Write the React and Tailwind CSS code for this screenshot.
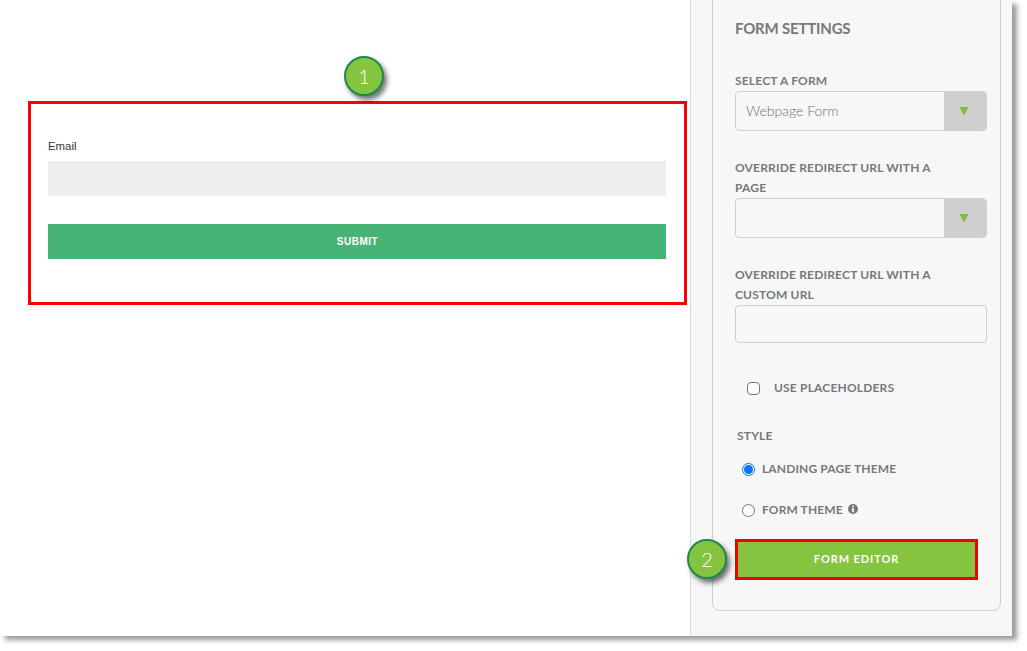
function Badge({ n, className }) {
  return (
    <div
      className={`absolute w-10 h-10 rounded-full bg-[#84c441] border-2 border-[#1c8a4b] text-white grid place-items-center text-[20px] font-light font-['Lato',sans-serif] shadow-[3px_4px_5px_rgba(0,0,0,0.55)] ${className}`}
    >
      {n}
    </div>
  );
}

function Label({ children, className = "" }) {
  return (
    <div className={`text-[12px] leading-5 font-bold uppercase tracking-[0.18px] text-[#77787b] ${className}`}>
      {children}
    </div>
  );
}

function Select({ value }) {
  return (
    <div className="flex h-10 w-[252px] rounded border border-[#cfcfcf] overflow-hidden">
      <div className="flex-1 px-2.5 text-[14px] leading-[38px] font-light text-[#6f7073]">{value}</div>
      <div className="w-[42px] bg-[#cfcfcf] grid place-items-center pr-[3px]">
        <svg width="10" height="10" viewBox="0 0 10 10">
          <path d="M0.5 1h9L5 9.5z" fill="#7ebd3c" />
        </svg>
      </div>
    </div>
  );
}

function Radio({ checked }) {
  return checked ? (
    <span className="w-[13px] h-[13px] rounded-full border border-[#0075ff] bg-white grid place-items-center">
      <span className="w-[9px] h-[9px] rounded-full bg-[#0075ff]" />
    </span>
  ) : (
    <span className="w-[13px] h-[13px] rounded-full border border-[#767676] bg-white" />
  );
}

export default function App() {
  return (
    <div className="w-[1027px] h-[651px] bg-white overflow-hidden font-['Lato',sans-serif]">
      <div className="relative w-[1012px] h-[636px] flex bg-white shadow-[5px_4px_5px_rgba(0,0,0,0.4)]">
        <Badge n="1" className="left-[344px] top-[56px]" />
        <Badge n="2" className="left-[687px] top-[539px]" />

        <div className="w-[690px] pl-[28px] pr-[3px] pt-[101px]">
          <div className="h-[204px] border-[3px] border-[#ff0000] pl-[17px] pr-[18px] pt-[33px] font-['Liberation_Sans',sans-serif]">
            <div className="text-[11.4px] leading-[18px] text-[#333]">Email</div>
            <div className="mt-[6px] h-[35px] bg-[#eeeeee]" />
            <div className="mt-[28px] h-[35px] bg-[#48b376] grid place-items-center text-white text-[10px] font-bold tracking-[0.5px] pl-[1px]">
              SUBMIT
            </div>
          </div>
        </div>

        <div className="w-[322px] bg-[#f7f7f7] border-l border-[#d9d9d9] pl-[21px]">
          <div className="-mt-[10px] h-[621px] w-[289px] border border-[#cfcfcf] rounded-lg pl-[22px] pt-[26px]">
            <div className="text-[15px] leading-[22px] font-bold text-[#77787b] tracking-[-0.2px]">FORM SETTINGS</div>

            <Label className="mt-[32px]">Select a form</Label>
            <Select value="Webpage Form" />

            <Label className="mt-[27px] w-[215px]">Override redirect URL with a page</Label>
            <Select />

            <Label className="mt-[27px] w-[215px]">Override redirect URL with a custom URL</Label>
            <div className="h-[38px] w-[252px] rounded border border-[#cfcfcf]" />

            <div className="mt-[35px] ml-[12px] flex items-center h-5">
              <span className="w-[13px] h-[13px] rounded-sm border border-[#767676] bg-white" />
              <span className="ml-[14px] text-[12px] tracking-[0.18px] font-bold text-[#77787b]">USE PLACEHOLDERS</span>
            </div>

            <Label className="mt-[28px] ml-[2px] tracking-[0.5px]">Style</Label>

            <div className="mt-[13px] ml-[7px] flex items-center gap-[7px] h-5">
              <Radio checked />
              <span className="text-[12px] tracking-[0.12px] font-bold text-[#77787b]">LANDING PAGE THEME</span>
            </div>
            <div className="mt-[21px] ml-[7px] flex items-center gap-[7px] h-5">
              <Radio />
              <span className="text-[12px] tracking-[0.12px] font-bold text-[#77787b]">FORM THEME</span>
              <svg width="10" height="10" viewBox="0 0 10 10" className="-ml-[2px] -mt-[2px]">
                <circle cx="5" cy="5" r="5" fill="#77787b" />
                <rect x="4.1" y="1.6" width="1.8" height="1.6" fill="#f7f7f7" />
                <rect x="4.1" y="4" width="1.8" height="4.2" fill="#f7f7f7" />
              </svg>
            </div>

            <button className="block mt-[19px] w-[243px] h-[41px] bg-[#84c441] border-[3px] border-[#f00000] text-white text-[11px] font-bold tracking-[0.9px]">
              FORM EDITOR
            </button>
          </div>
        </div>
      </div>
    </div>
  );
}
